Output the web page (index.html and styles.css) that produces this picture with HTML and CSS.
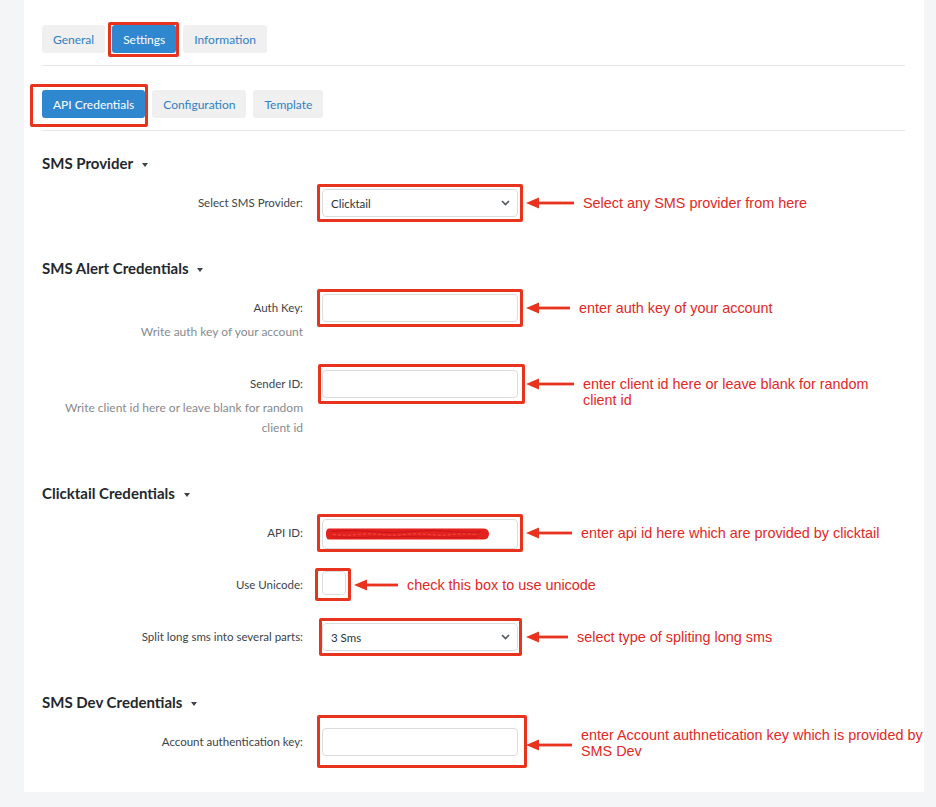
FILE: index.html
```html
<!DOCTYPE html>
<html lang="en">

<head>
    <meta charset="UTF-8">
    <meta name="viewport" content="width=device-width, initial-scale=1.0">
    <title>SMS Settings</title>
    <link rel="stylesheet" href="styles.css">
</head>

<body>
    <main class="panel">
        <nav class="tabs">
            <button class="tab">General</button>
            <span class="mark mark-tab"><button class="tab is-active">Settings</button></span>
            <button class="tab">Information</button>
        </nav>

        <nav class="tabs tabs-sub">
            <span class="mark mark-api"><button class="tab is-active">API Credentials</button></span>
            <button class="tab">Configuration</button>
            <button class="tab">Template</button>
        </nav>

        <section class="section section-first">
            <h3 class="section-title">SMS Provider</h3>
            <div class="row">
                <div class="row-label"><label>Select SMS Provider:</label></div>
                <div class="row-field">
                    <span class="mark">
                        <span class="select-wrap">
                            <select class="select">
                                <option>Clicktail</option>
                            </select>
                            <svg class="chevron" width="9" height="6" viewBox="0 0 9 6"><path d="M1 1l3.5 3.5L8 1" fill="none" stroke="#50575e" stroke-width="1.6"/></svg>
                        </span>
                    </span>
                </div>
                <div class="note">
                    <svg class="arrow" width="48" height="12" viewBox="0 0 48 12"><polygon points="0,6 13,0.5 13,11.5"/><rect x="12" y="4.6" width="36" height="2.8"/></svg>
                    <span class="note-text">Select any SMS provider from here</span>
                </div>
            </div>
        </section>

        <section class="section">
            <h3 class="section-title">SMS Alert Credentials</h3>
            <div class="row">
                <div class="row-label">
                    <label>Auth Key:</label>
                    <p class="help">Write auth key of your account</p>
                </div>
                <div class="row-field">
                    <span class="mark"><input class="input" type="text"></span>
                </div>
                <div class="note">
                    <svg class="arrow" width="44" height="12" viewBox="0 0 44 12"><polygon points="0,6 13,0.5 13,11.5"/><rect x="12" y="4.6" width="32" height="2.8"/></svg>
                    <span class="note-text">enter auth key of your account</span>
                </div>
            </div>
            <div class="row">
                <div class="row-label">
                    <label>Sender ID:</label>
                    <p class="help">Write client id here or leave blank for random client id</p>
                </div>
                <div class="row-field">
                    <span class="mark mark-wide"><input class="input" type="text"></span>
                </div>
                <div class="note note-wrap">
                    <svg class="arrow" width="48" height="12" viewBox="0 0 48 12"><polygon points="0,6 13,0.5 13,11.5"/><rect x="12" y="4.6" width="36" height="2.8"/></svg>
                    <span class="note-text">enter client id here or leave blank for random client id</span>
                </div>
            </div>
        </section>

        <section class="section">
            <h3 class="section-title">Clicktail Credentials</h3>
            <div class="row">
                <div class="row-label"><label>API ID:</label></div>
                <div class="row-field">
                    <span class="mark">
                        <span class="select-wrap">
                            <input class="input input-tall" type="text">
                            <svg class="redact" width="164" height="14" viewBox="0 0 164 14">
                                <path d="M3 1.5 H157 q6 0 6 5.5 q0 5.5 -6 5.5 H3 q-3 0 -3 -5.5 q0 -5.5 3 -5.5z" fill="#e3211d"/>
                                <path d="M5 4.5 q20 -2 40 0 t40 0 t40 0 t30 0" fill="none" stroke="#c8141a" stroke-width="1"/>
                                <path d="M7 7.5 q12 1.5 24 0 t24 0 t24 0 t24 0 t24 0 t24 0" fill="none" stroke="#f25a52" stroke-width="0.8" stroke-dasharray="3 2"/>
                                <path d="M6 10 q25 1 50 0 t50 0 t45 0" fill="none" stroke="#c8141a" stroke-width="0.8"/>
                            </svg>
                        </span>
                    </span>
                </div>
                <div class="note">
                    <svg class="arrow" width="46" height="12" viewBox="0 0 46 12"><polygon points="0,6 13,0.5 13,11.5"/><rect x="12" y="4.6" width="34" height="2.8"/></svg>
                    <span class="note-text">enter api id here which are provided by clicktail</span>
                </div>
            </div>
            <div class="row">
                <div class="row-label"><label>Use Unicode:</label></div>
                <div class="row-field row-field-auto">
                    <span class="mark mark-check"><input class="checkbox" type="checkbox"></span>
                </div>
                <div class="note">
                    <svg class="arrow" width="44" height="12" viewBox="0 0 44 12"><polygon points="0,6 13,0.5 13,11.5"/><rect x="12" y="4.6" width="32" height="2.8"/></svg>
                    <span class="note-text">check this box to use unicode</span>
                </div>
            </div>
            <div class="row">
                <div class="row-label"><label>Split long sms into several parts:</label></div>
                <div class="row-field">
                    <span class="mark mark-split">
                        <span class="select-wrap">
                            <select class="select">
                                <option>3 Sms</option>
                            </select>
                            <svg class="chevron" width="9" height="6" viewBox="0 0 9 6"><path d="M1 1l3.5 3.5L8 1" fill="none" stroke="#50575e" stroke-width="1.6"/></svg>
                        </span>
                    </span>
                </div>
                <div class="note">
                    <svg class="arrow" width="42" height="12" viewBox="0 0 42 12"><polygon points="0,6 13,0.5 13,11.5"/><rect x="12" y="4.6" width="30" height="2.8"/></svg>
                    <span class="note-text">select type of spliting long sms</span>
                </div>
            </div>
        </section>

        <section class="section">
            <h3 class="section-title">SMS Dev Credentials</h3>
            <div class="row">
                <div class="row-label"><label>Account authentication key:</label></div>
                <div class="row-field">
                    <span class="mark mark-tall"><input class="input" type="text"></span>
                </div>
                <div class="note note-wrap note-long">
                    <svg class="arrow arrow-low" width="46" height="12" viewBox="0 0 46 12"><polygon points="0,6 13,0.5 13,11.5"/><rect x="12" y="4.6" width="34" height="2.8"/></svg>
                    <span class="note-text">enter Account authnetication key which is provided by SMS Dev</span>
                </div>
            </div>
        </section>
    </main>
</body>

</html>
```

FILE: styles.css
```css
:root {
    --page-bg: #f4f5f6;
    --line: #e6e7e8;
    --tab-bg: #f0f0f1;
    --tab-text: #2f80c3;
    --blue: #2f87d0;
    --text: #2c3338;
    --label: #3c434a;
    --muted: #878a8e;
    --field-border: #dcdcde;
    --mark: #e8331f;
    --note: #e0291f;
}

html {
    font-family: "Lato", "Open Sans", sans-serif;
}

body {
    margin: 0;
    background-color: var(--page-bg);
}

.panel {
    box-sizing: border-box;
    width: 900px;
    min-height: 792px;
    margin-left: 24px;
    padding: 25px 19px 0 18px;
    background-color: #fff;
}

.tabs {
    display: flex;
    align-items: center;
    gap: 7px;
    padding-bottom: 12px;
    border-bottom: 1px solid var(--line);
}

.tabs-sub {
    margin-top: 24px;
}

.tab {
    height: 28px;
    padding: 0 11px;
    border: 0;
    border-radius: 3px;
    background-color: var(--tab-bg);
    color: var(--tab-text);
    font-family: "Lato", sans-serif;
    font-size: 12px;
}

.tab.is-active {
    background-color: var(--blue);
    color: #fff;
}

/* red annotation boxes drawn on top of the form */
.mark {
    display: inline-flex;
    padding: 2px;
    margin: -5px;
    border: 3px solid var(--mark);
    border-radius: 2px;
}

.mark-tab {
    padding: 0 0 1px 1px;
    margin: -3px -3px -4px -4px;
}

.mark-api {
    padding: 3px 0 6px 9px;
    margin: -6px -3px -9px -12px;
}

.mark-wide {
    padding: 3px 4px 3px 1px;
    margin: -6px -7px -6px -4px;
}

.mark-check {
    padding: 0 2px 3px 4px;
    margin: -3px -5px -6px -7px;
}

.mark-split {
    padding: 2px 1px 2px 0;
    margin: -5px -4px -5px -3px;
}

.mark-tall {
    padding: 10px 6px 9px 2px;
    margin: -13px -9px -12px -5px;
}

.section {
    margin-top: 41px;
}

.section-first {
    margin-top: 22px;
}

.section-title {
    margin: 0;
    font-size: 15px;
    line-height: 20px;
    font-weight: 700;
    color: #23282d;
}

.section-title::after {
    content: '';
    display: inline-block;
    margin-left: 9px;
    vertical-align: middle;
    border-left: 3.5px solid transparent;
    border-right: 3.5px solid transparent;
    border-top: 4px solid #3c434a;
}

.row {
    display: flex;
    align-items: flex-start;
    margin-top: 16px;
}

.row + .row {
    margin-top: 24px;
}

.row-label {
    flex: 0 0 261px;
    margin-right: 19px;
    text-align: right;
    font-size: 11.5px;
}

.row-label label {
    display: block;
    line-height: 28px;
    color: var(--label);
}

.help {
    margin: 0;
    padding-bottom: 4px;
    line-height: 20px;
    font-size: 12px;
    color: var(--muted);
}

.row-field {
    flex: 0 0 196px;
}

.row-field-auto {
    flex: 0 0 auto;
}

.input,
.select {
    box-sizing: border-box;
    width: 196px;
    height: 28px;
    margin: 0;
    padding: 0 8px;
    border: 1px solid var(--field-border);
    border-radius: 4px;
    background-color: #fff;
    font-family: "Lato", sans-serif;
    font-size: 11.5px;
    color: var(--text);
}

.input-tall {
    height: 30px;
    margin-bottom: -2px;
}

.select {
    appearance: none;
}

.select-wrap {
    position: relative;
    display: inline-flex;
}

.chevron {
    position: absolute;
    right: 8px;
    top: 11px;
    pointer-events: none;
}

.redact {
    position: absolute;
    left: 4px;
    top: 8px;
}

.checkbox {
    appearance: none;
    box-sizing: border-box;
    width: 24px;
    height: 24px;
    margin: 0;
    border: 1px solid var(--field-border);
    border-radius: 4px;
    background-color: #fff;
}

.note {
    display: flex;
    align-items: flex-start;
    margin: 6px 0 0 8px;
    font-family: "Liberation Sans", Arial, sans-serif;
    font-size: 14.4px;
    line-height: 16px;
    color: var(--note);
}

.arrow {
    flex: 0 0 auto;
    margin-top: 2px;
    fill: var(--mark);
}

.note-text {
    margin-left: 9px;
    white-space: nowrap;
}

.note-wrap .note-text {
    width: 295px;
    white-space: normal;
}

.note-long {
    margin-top: -1px;
}

.note-long .note-text {
    width: 350px;
}

.arrow-low {
    margin-top: 12px;
}
```
